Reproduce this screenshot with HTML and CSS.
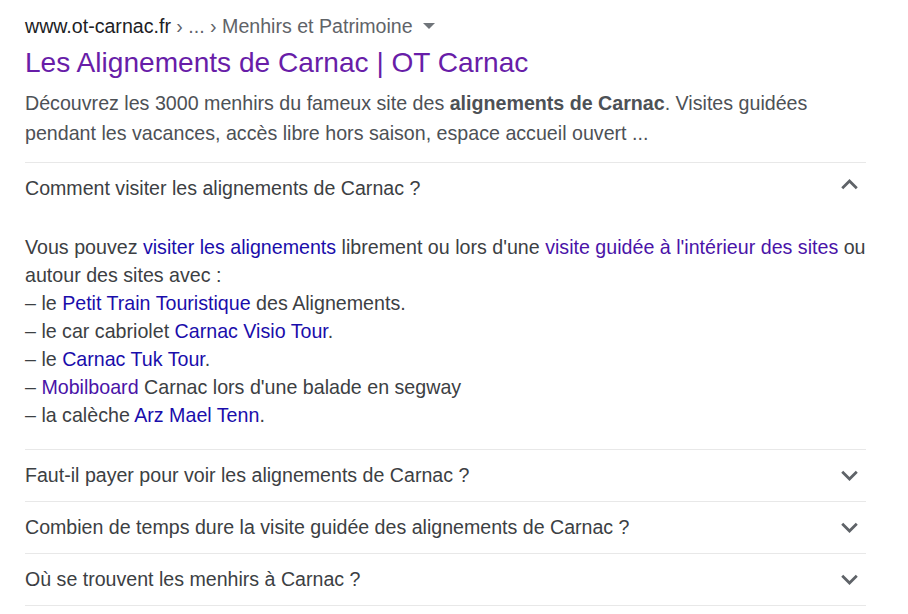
FILE: index.html
```html
<!DOCTYPE html>
<html lang="fr">
<head>
<meta charset="utf-8">
<title>Les Alignements de Carnac | OT Carnac</title>
<link rel="stylesheet" href="styles.css">
</head>
<body>
<div class="result">
  <div class="cite">
    <span class="domain">www.ot-carnac.fr</span><span class="path">&nbsp;› ... › Menhirs et Patrimoine</span>
    <svg class="caret" width="12" height="6" viewBox="0 0 12 6"><polygon points="0,0 12,0 6,6"/></svg>
  </div>
  <h3 class="title">Les Alignements de Carnac | OT Carnac</h3>
  <p class="snippet">Découvrez les 3000 menhirs du fameux site des <b>alignements de Carnac</b>. Visites guidées pendant les vacances, accès libre hors saison, espace accueil ouvert ...</p>
  <div class="faq">
    <div class="q">
      <div class="q-head">
        <span>Comment visiter les alignements de Carnac ?</span>
        <svg class="chev up" viewBox="0 0 24 24"><path d="M7.41 15.41L12 10.83l4.59 4.58L18 14l-6-6-6 6z"/></svg>
      </div>
      <div class="answer">Vous pouvez <a>visiter les alignements</a> librement ou lors d'une <a class="v">visite guidée à l'intérieur des sites</a> ou<br>autour des sites avec :<br>– le <a>Petit Train Touristique</a> des Alignements.<br>– le car cabriolet <a>Carnac Visio Tour</a>.<br>– le <a>Carnac Tuk Tour</a>.<br>– <a class="v">Mobilboard</a> Carnac lors d'une balade en segway<br>– la calèche <a>Arz Mael Tenn</a>.</div>
    </div>
    <div class="q">
      <div class="q-head">
        <span>Faut-il payer pour voir les alignements de Carnac ?</span>
        <svg class="chev" viewBox="0 0 24 24"><path d="M16.59 8.59L12 13.17 7.41 8.59 6 10l6 6 6-6z"/></svg>
      </div>
    </div>
    <div class="q">
      <div class="q-head">
        <span>Combien de temps dure la visite guidée des alignements de Carnac ?</span>
        <svg class="chev" viewBox="0 0 24 24"><path d="M16.59 8.59L12 13.17 7.41 8.59 6 10l6 6 6-6z"/></svg>
      </div>
    </div>
    <div class="q">
      <div class="q-head">
        <span>Où se trouvent les menhirs à Carnac ?</span>
        <svg class="chev" viewBox="0 0 24 24"><path d="M16.59 8.59L12 13.17 7.41 8.59 6 10l6 6 6-6z"/></svg>
      </div>
    </div>
  </div>
</div>
</body>
</html>
```
FILE: styles.css
```css
* { box-sizing: border-box; }
body {
  margin: 0;
  background: #fff;
  font-family: "Liberation Sans", Arial, sans-serif;
}
.result {
  width: 866px;
  padding: 13px 0 0 25px;
}
.cite {
  display: flex;
  align-items: center;
  font-size: 19.6px;
  line-height: 26px;
  white-space: nowrap;
}
.domain { color: #202124; }
.path { color: #5f6368; }
.caret {
  margin-left: 10px;
  margin-top: -1px;
  fill: #70757a;
}
.title {
  margin: 6px 0 0;
  font-size: 28.1px;
  font-weight: normal;
  line-height: 36px;
  color: #681da8;
}
.snippet {
  margin: 7px 0 14px;
  font-size: 19.65px;
  line-height: 30px;
  color: #4d5156;
}
.snippet b { font-weight: bold; color: #4d5156; }
.faq {
  border-bottom: 1px solid #e8e8e8;
}
.q {
  border-top: 1px solid #e8e8e8;
}
.q-head {
  height: 51px;
  display: flex;
  align-items: center;
  justify-content: space-between;
  font-size: 19.6px;
  color: #3c4043;
}
.chev {
  width: 33px;
  height: 33px;
  fill: #5f6368;
}
.chev.up { margin-bottom: 8px; }
.answer {
  padding: 19px 0 20px;
  font-size: 19.65px;
  line-height: 28px;
  color: #3c4043;
  white-space: nowrap;
}
.answer a { color: #1a0dab; }
.answer a.v { color: #4a13a8; }
```
